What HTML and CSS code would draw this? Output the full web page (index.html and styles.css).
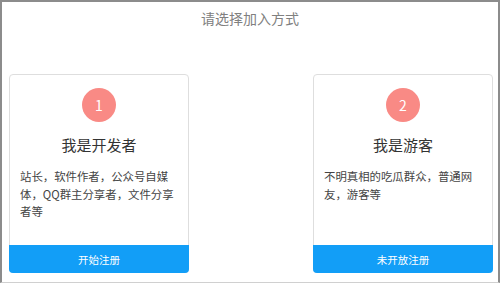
FILE: index.html
```html
<!DOCTYPE html>
<html lang="zh-CN">
<head>
    <meta charset="UTF-8">
    <meta name="viewport" content="width=device-width, initial-scale=1.0">
    <title>请选择加入方式</title>
    <link rel="stylesheet" href="styles.css">
</head>
<body>
    <div class="page">
        <h1 class="title">请选择加入方式</h1>
        <div class="choices">
            <div class="card">
                <div class="step">1</div>
                <h2>我是开发者</h2>
                <p class="desc">站长，软件作者，公众号自媒体，QQ群主分享者，文件分享者等</p>
                <button type="button" class="card-btn">开始注册</button>
            </div>
            <div class="card">
                <div class="step">2</div>
                <h2>我是游客</h2>
                <p class="desc">不明真相的吃瓜群众，普通网友，游客等</p>
                <button type="button" class="card-btn">未开放注册</button>
            </div>
        </div>
    </div>
</body>
</html>
```

FILE: styles.css
```css
html, body {
    margin: 0;
    padding: 0;
    background: #fff;
}
body {
    font-family: "Noto Sans CJK SC", "Noto Sans", sans-serif;
    color: #333;
}
.page {
    box-sizing: border-box;
    width: 500px;
    height: 283px;
    border: 2px solid #8c8c8c;
    border-bottom: 1px solid #d0d0d0;
    display: flex;
    flex-direction: column;
}
.title {
    margin: 0;
    padding-top: 6px;
    font-size: 14px;
    line-height: 20px;
    font-weight: normal;
    color: #808080;
    text-align: center;
}
.choices {
    display: flex;
    justify-content: space-between;
    padding: 0 5px 0 7px;
    margin-top: 46px;
}
.card {
    box-sizing: border-box;
    width: 180px;
    height: 199px;
    border: 1px solid #dedede;
    border-radius: 4px;
    display: flex;
    flex-direction: column;
    align-items: center;
    padding-top: 13px;
}
.step {
    width: 34px;
    height: 34px;
    border-radius: 50%;
    background: #f98a85;
    color: #fff;
    font-size: 14px;
    line-height: 34px;
    text-align: center;
}
.card h2 {
    margin: 13px 0 0;
    font-size: 15px;
    line-height: 20px;
    font-weight: normal;
    color: #333;
}
.desc {
    align-self: stretch;
    margin: 13px 0 0;
    padding: 0 10px;
    font-size: 11.4px;
    line-height: 17.5px;
    color: #444;
}
.card-btn {
    margin-top: auto;
    align-self: stretch;
    height: 28px;
    margin-left: -1px;
    margin-right: -1px;
    margin-bottom: -1px;
    border: none;
    border-radius: 0 0 4px 4px;
    background: #129ef7;
    color: #fff;
    font-family: inherit;
    font-size: 10.5px;
    cursor: pointer;
}
```
